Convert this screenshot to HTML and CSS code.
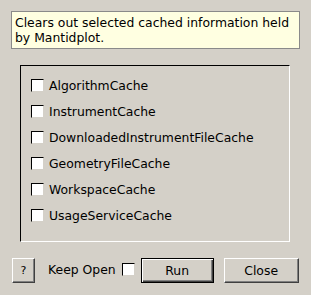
FILE: index.html
```html
<!DOCTYPE html>
<html>
<head>
<meta charset="utf-8">
<link rel="stylesheet" href="styles.css">
</head>
<body>
<div class="dialog">
  <div class="tip">Clears out selected cached information held<br>by Mantidplot.</div>
  <div class="group">
    <label class="row"><span class="box"></span><span>AlgorithmCache</span></label>
    <label class="row"><span class="box"></span><span>InstrumentCache</span></label>
    <label class="row"><span class="box"></span><span>DownloadedInstrumentFileCache</span></label>
    <label class="row"><span class="box"></span><span>GeometryFileCache</span></label>
    <label class="row"><span class="box"></span><span>WorkspaceCache</span></label>
    <label class="row"><span class="box"></span><span>UsageServiceCache</span></label>
  </div>
  <div class="buttons">
    <div class="btn help">?</div>
    <span class="keep">Keep Open</span>
    <span class="box keepbox"></span>
    <div class="btn run">Run</div>
    <div class="btn close">Close</div>
  </div>
</div>
</body>
</html>
```
FILE: styles.css
```css
html, body {
  margin: 0;
  padding: 0;
  background: #d4d0c8;
}
body {
  font-family: "DejaVu Sans", sans-serif;
  font-size: 12.4px;
  color: #000;
  width: 311px;
  height: 295px;
  overflow: hidden;
}
.dialog {
  display: flex;
  flex-direction: column;
  padding: 11px 11px 0 11px;
}
.tip {
  background: #ffffe1;
  border: 1px solid #8a8a8a;
  padding: 3px 2px 3px 3px;
  line-height: 15px;
  height: 30px;
  white-space: nowrap;
}
.group {
  margin: 16px 10px 0 9px;
  border-style: solid;
  border-width: 1px;
  border-color: #000 #fff #fff #000;
  padding: 6px 10px 13px 10px;
  display: flex;
  flex-direction: column;
}
.row {
  display: flex;
  align-items: center;
  height: 26px;
  gap: 5px;
}
.box {
  display: inline-block;
  box-sizing: border-box;
  width: 13px;
  height: 13px;
  background: #fff;
  border-style: solid;
  border-width: 1px;
  border-color: #000 #d4d0c8 #d4d0c8 #000;
  flex: none;
}
.buttons {
  margin-top: 16px;
  margin-left: 1px;
  display: flex;
  align-items: center;
  height: 25px;
}
.btn {
  box-sizing: border-box;
  height: 25px;
  display: flex;
  align-items: center;
  justify-content: center;
  border-style: solid;
  border-width: 1px;
  border-color: #fff #404040 #404040 #fff;
  box-shadow: inset -1px -1px 0 #808080;
  flex: none;
}
.help {
  width: 23px;
  font-size: 11px;
}
.keep {
  margin-left: 13px;
  white-space: nowrap;
  margin-top: -3px;
}
.keepbox {
  margin-left: 6px;
  margin-top: -2px;
}
.run {
  margin-left: 6px;
  width: 73px;
  border: 1px solid #000;
  box-shadow: inset 1px 1px 0 #fff, inset -1px -1px 0 #404040, inset -2px -2px 0 #808080;
}
.close {
  margin-left: 10px;
  width: 75px;
}
```
